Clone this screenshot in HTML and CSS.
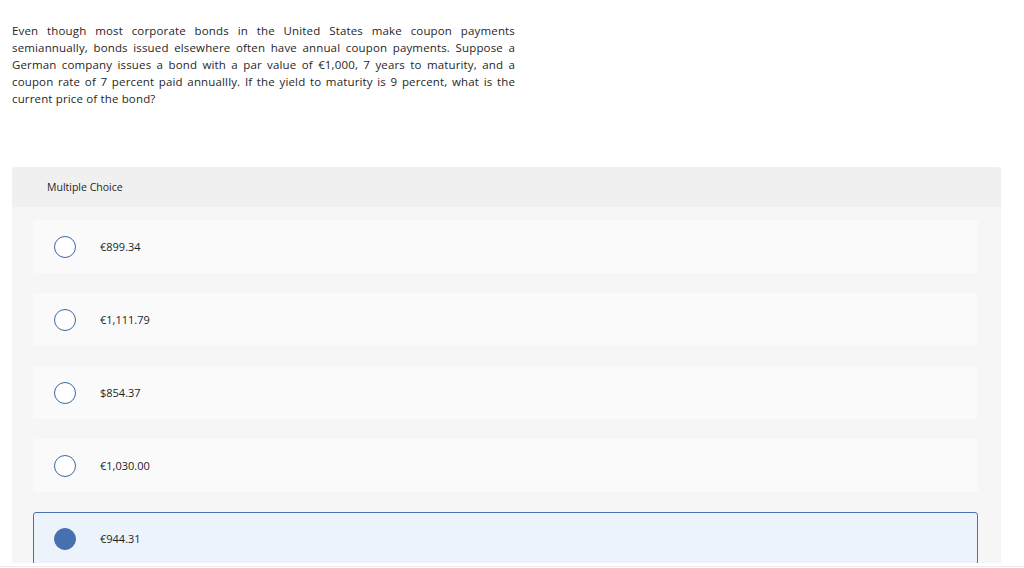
FILE: index.html
```html
<!DOCTYPE html>
<html>
<head>
<meta charset="utf-8">
<link rel="stylesheet" href="styles.css">
</head>
<body>
<div class="page">
  <p class="question">Even though most corporate bonds in the United States make coupon payments semiannually, bonds issued elsewhere often have annual coupon payments. Suppose a German company issues a bond with a par value of €1,000, 7 years to maturity, and a coupon rate of 7 percent paid annuallly. If the yield to maturity is 9 percent, what is the current price of the bond?</p>
  <div class="panel">
    <div class="panel-head">Multiple Choice</div>
    <div class="panel-body">
      <div class="option"><span class="radio"></span><span class="label">€899.34</span></div>
      <div class="option"><span class="radio"></span><span class="label">€1,111.79</span></div>
      <div class="option"><span class="radio"></span><span class="label">$854.37</span></div>
      <div class="option"><span class="radio"></span><span class="label">€1,030.00</span></div>
      <div class="option selected"><span class="radio"></span><span class="label">€944.31</span></div>
    </div>
  </div>
</div>
<div class="footer-line"></div>
</body>
</html>
```

FILE: styles.css
```css
html, body {
  margin: 0;
  padding: 0;
  background: #ffffff;
  overflow: hidden;
}
body {
  font-family: "Open Sans", Lato, sans-serif;
  color: #1f1f1f;
  height: 568px;
}
.page {
  height: 563px;
  overflow: hidden;
  padding: 0 23px 0 12px;
}
.question {
  margin: 0;
  padding-top: 22px;
  width: 503px;
  font-size: 11.5px;
  line-height: 17px;
  text-align: justify;
  letter-spacing: 0.15px;
}
.panel {
  margin-top: 60px;
  width: 989px;
  border-radius: 3px 3px 0 0;
  overflow: hidden;
}
.panel-head {
  background: #f0f0f0;
  height: 40px;
  display: flex;
  align-items: center;
  padding-left: 35px;
  font-size: 10.5px;
}
.panel-body {
  background: #f6f6f6;
  padding: 13px 23px 0 21px;
  display: flex;
  flex-direction: column;
  gap: 20px;
  height: 400px;
}
.option {
  flex: none;
  height: 53px;
  background: #fafafa;
  border: 1px solid transparent;
  border-radius: 3px;
  display: flex;
  align-items: center;
  padding-left: 20px;
  box-sizing: border-box;
}
.radio {
  width: 22px;
  height: 22px;
  box-sizing: border-box;
  border: 1px solid #3d68a3;
  border-radius: 50%;
  background: #fff;
  flex: none;
}
.label {
  margin-left: 24px;
  font-size: 11px;
  color: #1f1f1f;
}
.option.selected {
  background: #edf3fb;
  border-color: #4a70b0;
}
.option.selected .radio {
  background: #4670b0;
  border-color: #4670b0;
}
.footer-line {
  height: 1px;
  margin-top: 3px;
  background: #ececec;
}
```
